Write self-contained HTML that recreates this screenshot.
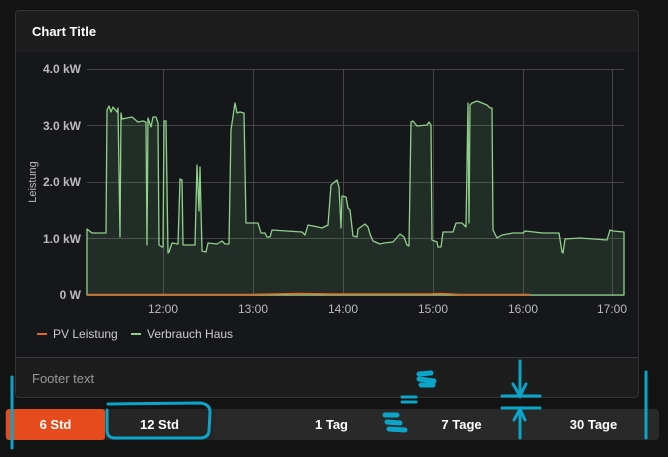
<!DOCTYPE html>
<html><head><meta charset="utf-8"><style>
html,body{margin:0;padding:0;background:#131313;width:668px;height:457px;overflow:hidden;font-family:"Liberation Sans",sans-serif}
.card{position:absolute;left:15px;top:10px;width:624px;height:388px;border:1px solid #333;border-radius:4px;background:#1d1d1d;box-sizing:border-box;overflow:hidden}
.hdr{position:absolute;left:0;top:0;right:0;height:41px;border-bottom:1px solid #3a3a3a;color:#fff;font-weight:bold;font-size:13px;line-height:42px;padding-left:16px}
.chart{position:absolute;left:0;top:41px;right:0;height:305px;background:#16171b;border-bottom:1px solid #3a3a3a}
.foot{position:absolute;left:0;top:347px;right:0;height:41px;color:#999;font-size:13px;line-height:42px;padding-left:16px}
.bar{position:absolute;left:5px;top:409px;width:654px;height:31px;background:#292929;border-radius:4px}
.btn{position:absolute;top:0;height:31px;line-height:31px;text-align:center;color:#fff;font-weight:bold;font-size:13px}
</style></head><body>
<div class="card">
<div class="hdr">Chart Title</div>
<div class="chart"></div>
<div class="foot">Footer text</div>
</div>
<svg style="position:absolute;left:0;top:0" width="668" height="457">
<g stroke="#444" stroke-width="1">
<line x1="87" y1="69.5" x2="624" y2="69.5"/><line x1="87" y1="125.5" x2="624" y2="125.5"/><line x1="87" y1="182.5" x2="624" y2="182.5"/><line x1="87" y1="238.5" x2="624" y2="238.5"/><line x1="87" y1="295.5" x2="624" y2="295.5"/>
<line x1="163.5" y1="69" x2="163.5" y2="295"/><line x1="253.5" y1="69" x2="253.5" y2="295"/><line x1="343.5" y1="69" x2="343.5" y2="295"/><line x1="433.5" y1="69" x2="433.5" y2="295"/><line x1="523.5" y1="69" x2="523.5" y2="295"/><line x1="612.5" y1="69" x2="612.5" y2="295"/>
</g>
<path fill="rgba(120,190,120,0.13)" stroke="#8fd08a" stroke-width="1.3" stroke-linejoin="round" d="M87,229 L92,233 98,233 106,233 107,110 109,106 111,112 113,107 117,112 118,108 120,237 121,113 122,119 132,117 138,122 143,121 146,122 147,245 148,118 151,127 153,117 156,117 158,123 159,245 162,247 163,247 164,121 166,121 168,253 169,252 172,243 178,244 180,179 182,180 183,245 195,245 197,165 199,211 200,167 202,251 206,252 208,243 217,244 222,241 225,244 229,244 231,130 235,103 237,113 240,112 244,113 246,223 258,223 261,233 265,233 267,237 270,237 272,230 302,232 305,235 308,225 318,227 322,228 328,225 331,185 337,180 339,187 341,228 342,196 346,197 348,208 350,210 353,236 357,237 358,229 365,224 368,227 370,234 373,241 380,244 384,243 393,242 400,234 404,237 407,245 409,246 411,122 413,121 417,126 427,125 429,122 431,125 432,240 437,242 438,247 441,247 443,232 453,232 456,223 462,223 466,227 468,103 469,223 470,105 472,103 477,101 487,105 490,108 492,108 493,230 497,238 502,235 513,233 523,233 525,231 543,233 559,233 562,252 563,253 565,239 580,238 607,240 610,230 613,231 624,232 L624,295 L87,295 Z"/>
<path fill="none" stroke="#e8671d" stroke-width="1.5" d="M87,294.5 L250,294.5 L300,293.5 L330,294 L430,294 L440,293.5 L460,294.5 L530,294.5"/>
<g fill="#bbb" font-size="12" font-weight="bold" text-anchor="end">
<text x="81" y="73">4.0 kW</text><text x="81" y="130">3.0 kW</text><text x="81" y="186">2.0 kW</text><text x="81" y="243">1.0 kW</text><text x="81" y="299">0 W</text>
</g>
<g fill="#bbb" font-size="12" text-anchor="middle">
<text x="163" y="313">12:00</text><text x="253" y="313">13:00</text><text x="343" y="313">14:00</text><text x="433" y="313">15:00</text><text x="523" y="313">16:00</text><text x="612" y="313">17:00</text>
<text transform="translate(36,182) rotate(-90)" font-size="11">Leistung</text>
</g>
<line x1="37" y1="334" x2="47" y2="334" stroke="#e8671d" stroke-width="2"/>
<line x1="131" y1="334" x2="141" y2="334" stroke="#8fd08a" stroke-width="2"/>
<g fill="#ccc" font-size="12"><text x="53" y="338">PV Leistung</text><text x="147" y="338">Verbrauch Haus</text></g>
</svg>
<div class="bar">
<div class="btn" style="left:1px;width:99px;background:#e54b1c;border-radius:3px">6 Std</div>
<div class="btn" style="left:100px;width:109px;background:#252525">12 Std</div>
<div class="btn" style="left:275px;width:103px">1 Tag</div>
<div class="btn" style="left:405px;width:103px">7 Tage</div>
<div class="btn" style="left:537px;width:103px">30 Tage</div>
</div>
<svg style="position:absolute;left:0;top:0" width="668" height="457" fill="none" stroke="#0aa5c8" stroke-width="3" stroke-linecap="round">
<line x1="12" y1="377" x2="12" y2="448"/>
<line x1="646" y1="372" x2="646" y2="438"/>
<path d="M108,404 L200,403 Q210,404 210,412 L209,431 Q208,438 200,438 L115,438 Q107,438 107,430 L107,410"/>
<line x1="520" y1="361" x2="520" y2="396"/><path d="M513,384 L520,396 L526,384"/>
<line x1="502" y1="396" x2="540" y2="396"/><line x1="502" y1="408" x2="540" y2="408"/>
<line x1="520" y1="438" x2="520" y2="409"/><path d="M514,420 L520,409 L525,420"/>
<line x1="402" y1="397" x2="416" y2="397"/><line x1="402" y1="402" x2="416" y2="402"/>
<path d="M419,374 L431,373 M419,379 L434,381 M421,385 L433,385" stroke-width="5"/>
<path d="M385,415 L397,415 M387,422 L400,423 M389,429 L405,430" stroke-width="5"/>
</svg>
</body></html>
